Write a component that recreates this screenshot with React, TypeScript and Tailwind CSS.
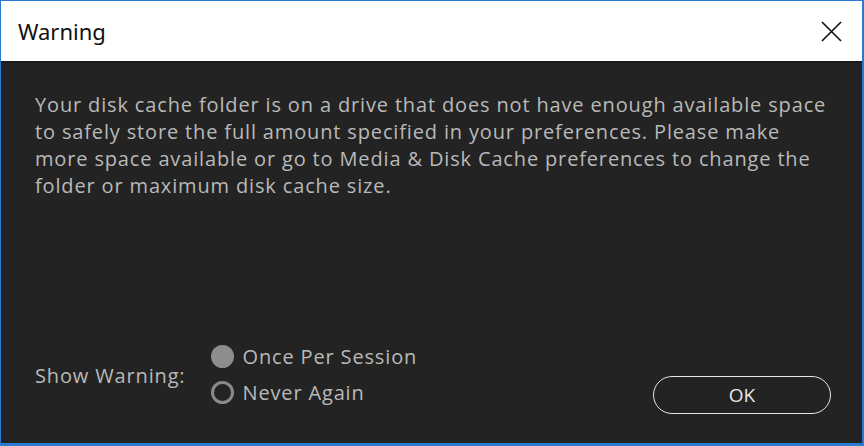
export default function App() {
  return (
    <div className="w-[864px] h-[446px] bg-[#2a7ad0] p-[1px] pr-[2px] pb-[3px] overflow-hidden">
      <div className="flex flex-col h-full bg-[#232323]">
        {/* Title bar */}
        <div className="flex items-center justify-between h-[62px] bg-white pl-[17px] pr-[20px] border-b-2 border-[#1a1a1a]">
          <span className="text-[22px] text-[#111] font-['Noto_Sans',sans-serif]">Warning</span>
          <svg width="21" height="21" viewBox="0 0 22 22">
            <path d="M1 1 L21 21 M21 1 L1 21" stroke="#111" strokeWidth="1.7" fill="none" />
          </svg>
        </div>

        {/* Body */}
        <div className="flex flex-col flex-1 px-[34px] pt-[28px] pb-[29px] font-['Open_Sans',sans-serif] text-[#b9b9b9]">
          <p className="text-[20px] leading-[27px] tracking-[0.85px]">
            Your disk cache folder is on a drive that does not have enough available space
            <br />
            to safely store the full amount specified in your preferences. Please make
            <br />
            more space available or go to Media &amp; Disk Cache preferences to change the
            <br />
            folder or maximum disk cache size.
          </p>

          <div className="mt-auto flex items-end justify-between">
            <div className="flex items-center mb-[10px]">
              <span className="text-[20px] tracking-[0.85px] mr-[26px] mt-[2px]">Show Warning:</span>
              <div className="flex flex-col gap-[13px]">
                <label className="flex items-center gap-[8px]">
                  <span className="w-[23px] h-[23px] rounded-full bg-[#8e8e8e]" />
                  <span className="text-[20px] leading-[23px] tracking-[0.85px]">Once Per Session</span>
                </label>
                <label className="flex items-center gap-[8px]">
                  <span className="w-[23px] h-[23px] rounded-full border-[3px] border-[#8a8a8a]" />
                  <span className="text-[20px] leading-[23px] tracking-[0.85px]">Never Again</span>
                </label>
              </div>
            </div>
            <button className="w-[178px] h-[38px] mr-[-3px] rounded-full border-[1.5px] border-[#e6e6e6] text-[#e6e6e6] text-[19px] font-['Open_Sans',sans-serif]">
              OK
            </button>
          </div>
        </div>
      </div>
    </div>
  );
}
